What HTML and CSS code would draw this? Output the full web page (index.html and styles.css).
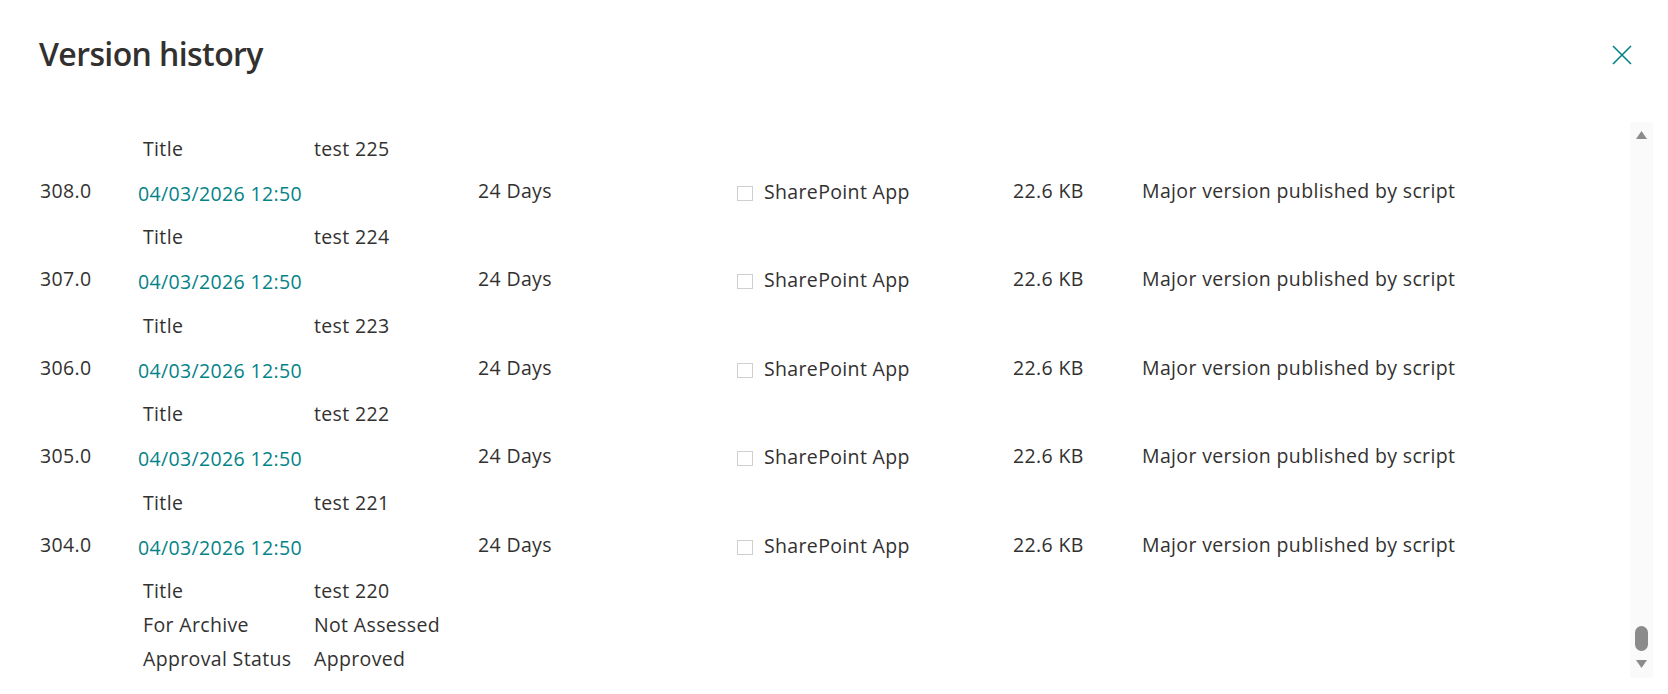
FILE: index.html
```html
<!DOCTYPE html>
<html lang="en">
<head>
<meta charset="utf-8">
<title>Version history</title>
<link rel="stylesheet" href="styles.css">
</head>
<body>
<div class="panel">
  <header class="panel-header">
    <h1 class="panel-title">Version history</h1>
    <button class="close-btn" aria-label="Close">
      <svg width="20" height="20" viewBox="0 0 20 20"><path d="M1 1 L19 19 M19 1 L1 19" stroke="#038387" stroke-width="1.6" fill="none"/></svg>
    </button>
  </header>
  <div class="panel-body">
    <div class="scroll">
      <div class="list">
        <div class="details">
          <div class="field"><span class="label">Title</span><span class="value">test 225</span></div>
        </div>

        <div class="version">
          <span class="num">308.0</span>
          <a class="date">04/03/2026 12:50</a>
          <span class="age">24 Days</span>
          <span class="by"><span class="check"></span>SharePoint App</span>
          <span class="size">22.6 KB</span>
          <span class="comment">Major version published by script</span>
        </div>
        <div class="details">
          <div class="field"><span class="label">Title</span><span class="value">test 224</span></div>
        </div>

        <div class="version">
          <span class="num">307.0</span>
          <a class="date">04/03/2026 12:50</a>
          <span class="age">24 Days</span>
          <span class="by"><span class="check"></span>SharePoint App</span>
          <span class="size">22.6 KB</span>
          <span class="comment">Major version published by script</span>
        </div>
        <div class="details">
          <div class="field"><span class="label">Title</span><span class="value">test 223</span></div>
        </div>

        <div class="version">
          <span class="num">306.0</span>
          <a class="date">04/03/2026 12:50</a>
          <span class="age">24 Days</span>
          <span class="by"><span class="check"></span>SharePoint App</span>
          <span class="size">22.6 KB</span>
          <span class="comment">Major version published by script</span>
        </div>
        <div class="details">
          <div class="field"><span class="label">Title</span><span class="value">test 222</span></div>
        </div>

        <div class="version">
          <span class="num">305.0</span>
          <a class="date">04/03/2026 12:50</a>
          <span class="age">24 Days</span>
          <span class="by"><span class="check"></span>SharePoint App</span>
          <span class="size">22.6 KB</span>
          <span class="comment">Major version published by script</span>
        </div>
        <div class="details">
          <div class="field"><span class="label">Title</span><span class="value">test 221</span></div>
        </div>

        <div class="version">
          <span class="num">304.0</span>
          <a class="date">04/03/2026 12:50</a>
          <span class="age">24 Days</span>
          <span class="by"><span class="check"></span>SharePoint App</span>
          <span class="size">22.6 KB</span>
          <span class="comment">Major version published by script</span>
        </div>
        <div class="details">
          <div class="field"><span class="label">Title</span><span class="value">test 220</span></div>
          <div class="field"><span class="label">For Archive</span><span class="value">Not Assessed</span></div>
          <div class="field"><span class="label">Approval Status</span><span class="value">Approved</span></div>
        </div>
      </div>
    </div>
    <div class="scrollbar">
      <svg class="arrow" width="11" height="8" viewBox="0 0 11 8"><polygon points="5.5,0 11,8 0,8" fill="#8b8b8b"/></svg>
      <div class="track-space"></div>
      <div class="thumb"></div>
      <svg class="arrow arrow-down" width="11" height="8" viewBox="0 0 11 8"><polygon points="0,0 11,0 5.5,8" fill="#8b8b8b"/></svg>
    </div>
  </div>
</div>
</body>
</html>
```

FILE: styles.css
```css
* { box-sizing: border-box; }

html, body {
  margin: 0;
  padding: 0;
  background: #ffffff;
}

body {
  font-family: "Open Sans", "Noto Sans", "Liberation Sans", sans-serif;
  color: #323130;
  width: 1668px;
  height: 694px;
  overflow: hidden;
}

.panel {
  display: flex;
  flex-direction: column;
  height: 694px;
}

.panel-header {
  display: flex;
  align-items: flex-start;
  justify-content: space-between;
  padding: 30px 36px 0 39px;
  height: 122px;
}

.panel-title {
  margin: 0;
  font-size: 32px;
  line-height: 48px;
  font-weight: 600;
  color: #323130;
  letter-spacing: -0.6px;
}

.close-btn {
  border: 0;
  background: transparent;
  padding: 0;
  margin-top: 15px;
  width: 20px;
  height: 20px;
  cursor: pointer;
  display: flex;
}

.panel-body {
  display: flex;
  height: 556px;
}

.scroll {
  flex: 1;
  overflow: hidden;
  padding-left: 40px;
}

.list {
  padding-top: 6px;
}

.version {
  display: grid;
  grid-template-columns: 98px 340px 259px 276px 129px 1fr;
  font-size: 19.5px;
  letter-spacing: 0.35px;
  line-height: 34px;
  padding: 4px 0 8.4px;
  white-space: nowrap;
}

.date {
  color: #038387;
  padding-top: 3px;
  margin-bottom: -3px;
  text-decoration: none;
}

.by {
  display: flex;
  align-items: flex-start;
  padding-top: 1px;
  margin-bottom: -1px;
}

.check {
  width: 16px;
  height: 15px;
  border: 1px solid #cfcfcf;
  margin: 11px 11px 0 0;
  flex: none;
}

.details {
  padding: 4px 0 4px 103px;
  font-size: 19.5px;
  letter-spacing: 0.35px;
  line-height: 34px;
}

.field {
  display: grid;
  grid-template-columns: 171px 1fr;
  white-space: nowrap;
}

.scrollbar {
  width: 23px;
  margin-right: 15px;
  background: #fafafa;
  display: flex;
  flex-direction: column;
  align-items: center;
  padding: 9px 0 10px;
}

.arrow { display: block; flex: none; }

.track-space { flex: 1; }

.thumb {
  width: 13px;
  height: 25px;
  border-radius: 7px;
  background: #8b8b8b;
  margin-bottom: 9px;
}
```
